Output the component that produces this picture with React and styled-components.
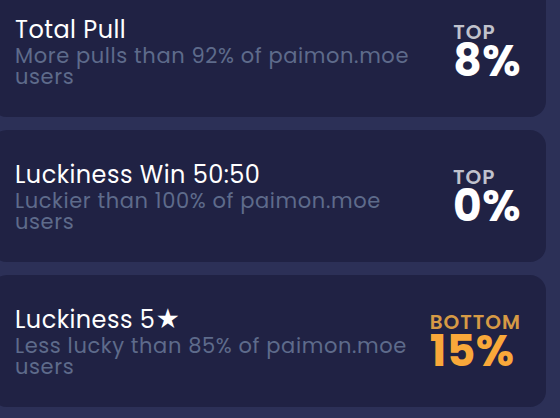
import styled, { createGlobalStyle } from 'styled-components'

const GlobalStyle = createGlobalStyle`
  html, body {
    margin: 0;
    padding: 0;
    background: #2c3057;
    overflow: hidden;
  }
  body {
    font-family: Poppins, Inter, "Noto Sans", sans-serif;
  }
`;

const stats = [
  { title: 'Total Pull', desc: 'More pulls than 92% of paimon.moe users', label: 'TOP', value: '8%' },
  { title: 'Luckiness Win 50:50', desc: 'Luckier than 100% of paimon.moe users', label: 'TOP', value: '0%' },
  { title: 'Luckiness 5★', desc: 'Less lucky than 85% of paimon.moe users', label: 'BOTTOM', value: '15%', bad: true },
];

function App() {
  return (
    <>
      <GlobalStyle />
      <List>
        {stats.map((s) => (
          <Card key={s.title}>
            <Info>
              <Title>{s.title}</Title>
              <Desc>{s.desc}</Desc>
            </Info>
            <Rank>
              <RankLabel $bad={s.bad}>{s.label}</RankLabel>
              <RankValue $bad={s.bad}>{s.value}</RankValue>
            </Rank>
          </Card>
        ))}
      </List>
    </>
  )
}

const List = styled.div`
  display: flex;
  flex-direction: column;
  gap: 13px;
  margin: -15px 14px 0 -9px;
`;
const Card = styled.div`
  height: 132px;
  box-sizing: border-box;
  background: #202244;
  border-radius: 16px;
  padding: 0 25px 0 24px;
  display: flex;
  align-items: center;
  justify-content: space-between;
  gap: 8px;
`;
const Info = styled.div`
  flex: 1;
  max-width: 405px;
`;
const Title = styled.div`
  color: #ffffff;
  font-size: 24px;
  line-height: 30px;
  letter-spacing: 0.45px;
`;
const Desc = styled.div`
  color: #5e6b8b;
  font-size: 21px;
  line-height: 21px;
  letter-spacing: 0.6px;
`;
const Rank = styled.div`
  display: flex;
  flex-direction: column;
  align-items: flex-start;
`;
const RankLabel = styled.div`
  color: ${(p) => (p.$bad ? '#d69a45' : '#c0c2cd')};
  font-size: 20px;
  font-weight: 600;
  line-height: 20px;
  letter-spacing: 1px;
`;
const RankValue = styled.div`
  color: ${(p) => (p.$bad ? '#f9a83a' : '#ffffff')};
  font-size: 44px;
  font-weight: 700;
  line-height: 38px;
  letter-spacing: 0.5px;
`;

export default App
